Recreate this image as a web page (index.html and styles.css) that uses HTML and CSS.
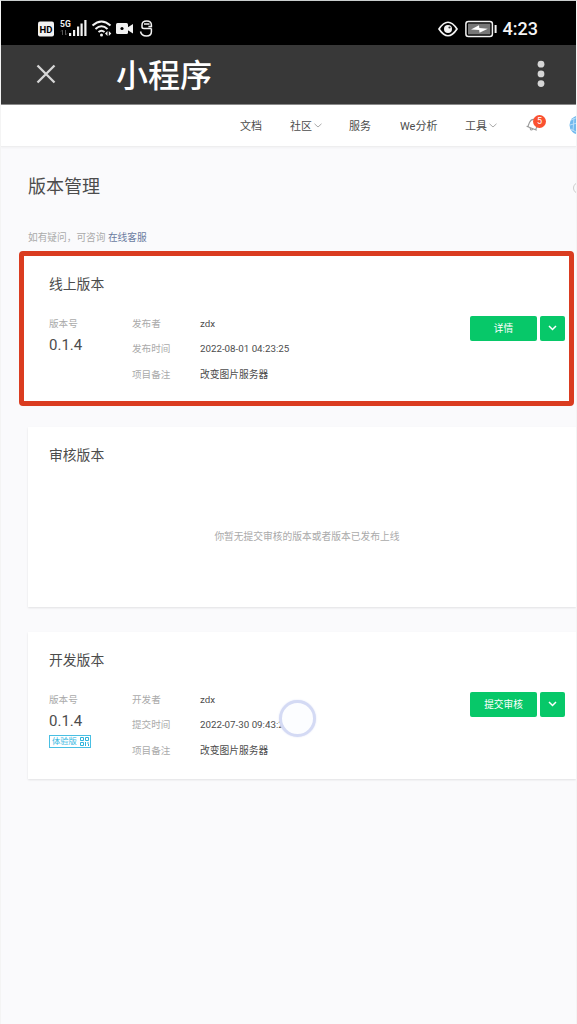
FILE: index.html
```html
<!DOCTYPE html>
<html lang="zh-CN">
<head>
  <meta charset="UTF-8">
  <meta name="viewport" content="width=device-width, initial-scale=1.0">
  <title>小程序</title>
  <link rel="stylesheet" href="styles.css">
</head>
<body>
  <div class="phone">
    <div class="status-bar">
      <svg class="status-icons" width="116" height="20" viewBox="0 0 116 20" fill="#f2f2f2">
        <rect x="0" y="2.500" width="16" height="15" rx="2"/>
        <text class="hd-text" x="8" y="13.500" text-anchor="middle">HD</text>
        <text class="net-text" x="22" y="7.500">5G</text>
        <path d="M24.500 16v-5m-1.500 1.500 1.500-1.500M27.500 11v5m1.500-1.500-1.500 1.500" stroke="#555" stroke-width="1" fill="none"/>
        <rect x="31" y="14" width="2.200" height="3"/>
        <rect x="35" y="11" width="2.200" height="6"/>
        <rect x="39" y="7.500" width="2.200" height="9.500"/>
        <rect x="42.500" y="4.500" width="2.200" height="12.500"/>
        <rect x="46.300" y="1" width="2.200" height="16"/>
        <path d="M54.500 6.500q9-8 18 0M57.500 10q6-5.500 12 0M60.500 13q3-2.500 6 0" stroke="#f2f2f2" stroke-width="2" fill="none"/>
        <circle cx="63.500" cy="16" r="1.500"/>
        <path d="M69.500 12v5l-2.500-2.500zM70.800 12v5l2.500-2.500z"/>
        <rect x="78" y="4" width="12" height="11" rx="1.500"/>
        <path d="M89.500 8.500 95 5v9.500l-5.500-3.500z"/>
        <circle cx="84" cy="9.500" r="1.600" fill="#000"/>
        <path d="M104 8V6q0-4 4.700-4t4.700 4v1.500h-3M104 8q0 1.500 2 1.500h7.500M102.500 12.500q1 4.500 6 4.500 4.900 0 4.900-4.200V9.500M106 5h5.500" stroke="#f2f2f2" stroke-width="1.500" fill="none"/>
      </svg>
      <div class="status-right">
        <svg width="20" height="16" viewBox="0 0 20 16" fill="none" stroke="#f2f2f2" stroke-width="1.700">
          <path d="M1 8q9-13.500 18 0-9 13.500-18 0z"/>
          <circle cx="10" cy="8" r="4" fill="#f2f2f2" stroke="none"/>
          <circle cx="11.500" cy="6.500" r="1.100" fill="#333" stroke="none"/>
        </svg>
        <svg class="battery" width="33" height="18" viewBox="0 0 33 18">
          <rect x=".9" y="1.400" width="26.500" height="15.200" rx="2.500" fill="#000" stroke="#f2f2f2" stroke-width="1.500"/>
          <rect x="3" y="3.600" width="22.300" height="10.800" fill="#777"/>
          <path d="M6 9.500 14 5.300l.3 2.600 8.500.800-8.300 4-.3-2.600z" fill="#fff"/>
          <rect x="29.600" y="5" width="2" height="8" fill="#f2f2f2"/>
        </svg>
        <span class="clock">4:23</span>
      </div>
    </div>

    <div class="title-bar">
      <svg width="20" height="20" viewBox="0 0 20 20" stroke="#d6d6d6" stroke-width="2.300">
        <path d="M1.500 1.500 18.500 18.500M18.500 1.500 1.500 18.500"/>
      </svg>
      <span class="app-title">小程序</span>
      <svg class="more" width="8" height="28" viewBox="0 0 8 28" fill="#d6d6d6">
        <circle cx="4" cy="4.200" r="3.400"/>
        <circle cx="4" cy="13.900" r="3.400"/>
        <circle cx="4" cy="23.600" r="3.400"/>
      </svg>
    </div>

    <nav class="nav">
      <a class="nav-item docs">文档</a>
      <a class="nav-item community">社区<svg width="8" height="5" viewBox="0 0 8 5"><path d="M.5.800 4 4 7.500.800"/></svg></a>
      <a class="nav-item service">服务</a>
      <a class="nav-item analysis">We分析</a>
      <a class="nav-item tools">工具<svg width="8" height="5" viewBox="0 0 8 5"><path d="M.5.800 4 4 7.500.800"/></svg></a>
      <span class="bell">
        <svg width="14" height="15" viewBox="0 0 14 15" fill="none" stroke="#999" stroke-width="1.100">
          <path d="M1.500 11.500h11M2.800 11.500V7Q3 2.500 7 2.200q4 .300 4.200 4.300v5M5.500 12q1.500 2.500 3 0" transform="rotate(22 7 8)"/>
        </svg>
        <span class="badge">5</span>
      </span>
      <span class="avatar">
        <svg width="18" height="20" viewBox="0 0 18 20">
          <circle cx="10" cy="10" r="9.500" fill="#70b9ee"/>
          <path d="M2 5 9 2M2 14l5 3M1 10l7-2M5 3l-1 13" stroke="#b9def8" fill="none"/>
        </svg>
      </span>
    </nav>

    <main class="content">
      <div class="page-head">
        <h1>版本管理</h1>
        <span class="help"></span>
      </div>
      <p class="hint">如有疑问，可咨询 <a>在线客服</a></p>

      <section class="card online">
        <h2>线上版本</h2>
        <div class="card-body">
          <div class="version">
            <span class="label">版本号</span>
            <span class="number">0.1.4</span>
          </div>
          <dl class="info">
            <dt>发布者</dt><dd>zdx</dd>
            <dt>发布时间</dt><dd>2022-08-01 04:23:25</dd>
            <dt>项目备注</dt><dd>改变图片服务器</dd>
          </dl>
          <div class="actions">
            <button class="btn">详情</button>
            <button class="btn btn-more"><svg width="9" height="6" viewBox="0 0 9 6"><path d="M1 1 4.500 4.500 8 1"/></svg></button>
          </div>
        </div>
      </section>

      <section class="card audit">
        <h2>审核版本</h2>
        <p class="empty">你暂无提交审核的版本或者版本已发布上线</p>
      </section>

      <section class="card dev">
        <h2>开发版本</h2>
        <div class="card-body">
          <div class="version">
            <span class="label">版本号</span>
            <span class="number">0.1.4</span>
            <span class="trial">体验版
              <svg width="9" height="9" viewBox="0 0 9 9" fill="none" stroke="#2fb4dc">
                <path d="M.5.500h3v3h-3zM5.500.500h3v3h-3zM.5 5.500h3v3h-3zM5.500 5v4M7 6h2M8.500 7v2"/>
              </svg>
            </span>
          </div>
          <dl class="info">
            <dt>开发者</dt><dd>zdx</dd>
            <dt>提交时间</dt><dd>2022-07-30 09:43:2</dd>
            <dt>项目备注</dt><dd>改变图片服务器</dd>
          </dl>
          <div class="actions">
            <button class="btn">提交审核</button>
            <button class="btn btn-more"><svg width="9" height="6" viewBox="0 0 9 6"><path d="M1 1 4.500 4.500 8 1"/></svg></button>
          </div>
        </div>
        <span class="touch-dot"></span>
      </section>
    </main>
  </div>
</body>
</html>
```
FILE: styles.css
```css
*, *::after {
  box-sizing: border-box;
}

body {
  margin: 0;
  font-family: Roboto, "Noto Sans CJK SC", sans-serif;
  color: #4c4c4c;
  background-color: #fafafc;
}

h1, h2, p, dl, dd {
  margin: 0;
  font-weight: normal;
}

.phone {
  height: 1024px;
  overflow: hidden;
  border: 1px solid;
  border-width: 1px 1px 0;
  border-color: #c9cdcd #f4f4f4 #fff;
}

/* status bar */
.status-bar {
  height: 44px;
  padding: 11px 38px 0 37px;
  background-color: #000;
  display: flex;
  justify-content: space-between;
  align-items: center;
}

.status-icons {
  margin-top: 1px;
}

.hd-text {
  font: bold 9.5px Roboto, sans-serif;
  fill: #000;
}

.net-text {
  font: bold 8.5px Roboto, sans-serif;
}

.status-right {
  display: flex;
  align-items: center;
  color: #f5f5f5;
}

.battery {
  margin: 0 5px 0 7px;
}

.clock {
  font-size: 18px;
  font-weight: 500;
  line-height: 20px;
}

/* title bar */
.title-bar {
  height: 60px;
  padding: 0 31px 1px 35px;
  background-color: #383838;
  border-bottom: 1px solid #8a8a8a;
  display: flex;
  align-items: center;
}

.app-title {
  margin-left: 60px;
  padding-top: 3px;
  color: #fff;
  font-size: 32px;
  font-weight: 500;
  line-height: 40px;
}

.more {
  margin-left: auto;
}

/* navigation */
.nav {
  height: 42px;
  padding: 0 0 2px 239px;
  background-color: #fff;
  border-bottom: 1px solid #eeeeef;
  box-shadow: 0 1px 2px rgba(0, 0, 0, 0.04);
  display: flex;
  align-items: center;
  font-size: 11px;
  white-space: nowrap;
  overflow: hidden;
}

.nav-item {
  flex: none;
  display: flex;
  align-items: center;
}

.nav-item svg {
  margin: 2px 0 0 2px;
  fill: none;
  stroke: #aaa;
}

.docs { width: 50px; }
.community { width: 59px; }
.service { width: 51px; }
.analysis { width: 65px; }
.tools { width: 61px; }

.bell {
  position: relative;
  flex: none;
  width: 43px;
  height: 15px;
}

.badge {
  position: absolute;
  left: 7px;
  top: -2px;
  width: 13px;
  height: 13px;
  border-radius: 50%;
  background-color: #fa5130;
  color: #fff;
  font-size: 9px;
  line-height: 13px;
  text-align: center;
}

.avatar {
  flex: none;
  height: 20px;
}

/* page */
.content {
  padding-left: 27px;
}

.page-head {
  display: flex;
  justify-content: space-between;
  align-items: center;
  height: 28px;
  margin-top: 26px;
  overflow: hidden;
}

h1 {
  font-size: 18px;
  line-height: 28px;
}

.help {
  flex: none;
  width: 12px;
  height: 12px;
  margin: 2px -9px 0 0;
  border: 1px solid #ccc;
  border-radius: 50%;
}

.hint {
  margin-top: 29px;
  font-size: 9.7px;
  line-height: 16px;
  color: #aaa;
}

.hint a {
  color: #6b7ba0;
}

.card {
  position: relative;
  padding: 18px 11px 0 21px;
  background-color: #fff;
  box-shadow: 0 1px 2px rgba(0, 0, 0, 0.1);
}

h2 {
  font-size: 13.8px;
  line-height: 20px;
}

.online {
  height: 149px;
  margin: 9px 4px 0 -5px;
  padding: 19px 7px 0 26px;
}

/* red frame around the published version */
.online::after {
  content: "";
  position: absolute;
  left: -4px;
  top: -4px;
  width: 555px;
  height: 155px;
  border: 5px solid #da3c20;
  border-radius: 4px;
}

.audit {
  height: 180px;
  margin-top: 23px;
}

.dev {
  height: 147px;
  margin-top: 25px;
}

.empty {
  margin-top: 62px;
  text-align: center;
  color: #aaa;
  font-size: 9.75px;
  line-height: 20px;
}

.card-body {
  display: flex;
  align-items: flex-start;
  margin-top: 17px;
}

.version {
  width: 83px;
  display: flex;
  flex-direction: column;
  align-items: flex-start;
}

.label, dt {
  color: #aaa;
  font-size: 9.6px;
  line-height: 25px;
}

.number {
  font-size: 15px;
  line-height: 18px;
}

.trial {
  display: flex;
  align-items: center;
  gap: 3px;
  width: 42px;
  height: 13px;
  margin-top: 5px;
  padding-left: 2px;
  border: 1px solid #49bfe3;
  color: #35b7df;
  font-size: 8.3px;
  line-height: 11px;
  white-space: nowrap;
}

.info {
  display: grid;
  grid-template-columns: 68px auto;
  grid-auto-rows: 25.3px;
}

dd {
  font-size: 9.75px;
  line-height: 25px;
}

.actions {
  display: flex;
  gap: 3px;
  margin: 5px 0 0 auto;
}

.btn {
  width: 67px;
  height: 25px;
  padding: 0 0 1px;
  border: none;
  border-radius: 2px;
  background-color: #07c869;
  color: #fff;
  font-family: inherit;
  font-size: 9.7px;
}

.btn-more {
  width: 25px;
  display: flex;
  justify-content: center;
  align-items: center;
}

.btn-more svg {
  fill: none;
  stroke: #fff;
  stroke-width: 1.5;
}

/* screen recorder touch marker */
.touch-dot {
  position: absolute;
  left: 251px;
  top: 68px;
  width: 37px;
  height: 37px;
  border: 3px solid #d4daf4;
  border-radius: 50%;
  background-color: #fcfdff;
  box-shadow: 0 0 2px #dfe3f7;
}
```
